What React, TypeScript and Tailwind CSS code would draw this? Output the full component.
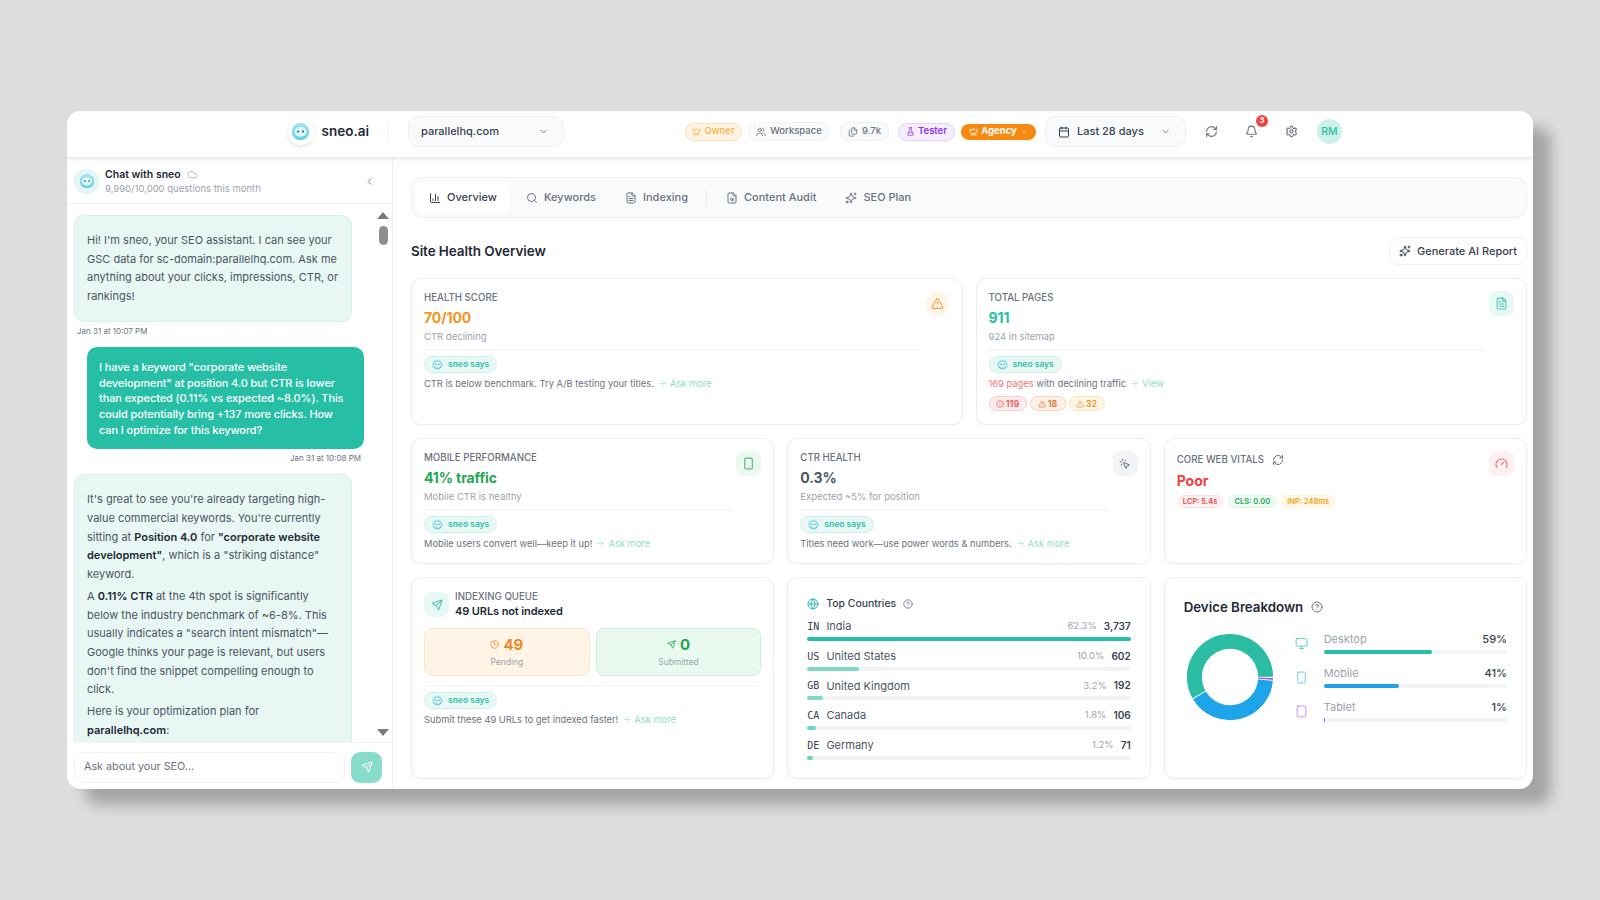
import React from "react";
import {
  ChartColumn, Search, FileText, FileSearch, Sparkles, Crown, Users, Files, FlaskConical, Calendar,
  ChevronDown, ChevronLeft, RefreshCw, Bell, Settings, TriangleAlert, Smartphone, MousePointerClick,
  Gauge, Send, Clock, Globe, CircleHelp, Monitor, Tablet, CircleAlert, ArrowRight, Cloud,
} from "lucide-react";

function Face({ size = 16 }: { size?: number }) {
  return (
    <svg width={size} height={size} viewBox="0 0 24 24">
      <defs>
        <linearGradient id="fg" x1="0" y1="0" x2="0" y2="1">
          <stop offset="0" stopColor="#a8e6ee" />
          <stop offset="1" stopColor="#5fd0dd" />
        </linearGradient>
      </defs>
      <circle cx="12" cy="12" r="11" fill="url(#fg)" />
      <ellipse cx="12" cy="12.5" rx="7.6" ry="6.2" fill="#dff6f7" />
      <circle cx="8.8" cy="12" r="1.3" fill="#28536b" />
      <circle cx="15.2" cy="12" r="1.3" fill="#28536b" />
    </svg>
  );
}

function SneoPill() {
  return (
    <div className="flex h-[17px] w-fit items-center gap-[5px] rounded-full border border-[#cdf1ea] bg-[#e8f8f5] pl-[7px] pr-[7px] text-[8.5px] font-semibold text-[#2fbfa5]">
      <Face size={11} />
      <span>sneo says</span>
    </div>
  );
}

function Ask({ label = "Ask more" }: { label?: string }) {
  return (
    <span className="ml-[4px] text-[#8fdcca]">
      <ArrowRight size={9} strokeWidth={1.6} className="mr-[3px] inline align-[-1px]" />
      {label}
    </span>
  );
}

function Label({ children }: { children: React.ReactNode }) {
  return <div className="text-[9.7px] font-medium uppercase leading-[14px] text-[#6b7280]">{children}</div>;
}

function Card({ children, className = "" }: { children: React.ReactNode; className?: string }) {
  return (
    <div className={`min-w-0 rounded-[10px] border border-[#e9eef2] bg-white shadow-[0_1px_2px_rgba(0,0,0,0.03)] ${className}`}>
      {children}
    </div>
  );
}

function IconBox({ children, className }: { children: React.ReactNode; className: string }) {
  return <div className={`flex h-[25px] w-[25px] shrink-0 items-center justify-center rounded-[8px] ${className}`}>{children}</div>;
}

function StatCard({
  label, value, valueClass, sub, text, icon, iconClass, extra,
}: {
  label: string; value: string; valueClass: string; sub: string; text: React.ReactNode;
  icon: React.ReactNode; iconClass: string; extra?: React.ReactNode;
}) {
  return (
    <Card className="flex gap-[5px] pl-[12px] pr-[12px] pt-[12px]">
      <div className="min-w-0 flex-1">
        <Label>{label}</Label>
        <div className={`mt-[3px] text-[14px] font-bold leading-[20px] tracking-[-0.1px] ${valueClass}`}>{value}</div>
        <div className="mt-[2px] text-[9.5px] leading-[14px] text-[#9ca3af]">{sub}</div>
        <div className="mt-[5px] border-t border-[#f1f3f5] pt-[6px]">
          <SneoPill />
          <div className="mt-[4px] text-[9.35px] leading-[14px] text-[#6b7280]">{text}</div>
          {extra}
        </div>
      </div>
      <div>
        <IconBox className={iconClass}>{icon}</IconBox>
      </div>
    </Card>
  );
}

const countries = [
  { c: "IN", n: "India", p: "62.3%", v: "3,737", w: 100, o: "bg-[#26bfa5]" },
  { c: "US", n: "United States", p: "10.0%", v: "602", w: 16, o: "bg-[#7dd9c8]" },
  { c: "GB", n: "United Kingdom", p: "3.2%", v: "192", w: 5, o: "bg-[#7dd9c8]" },
  { c: "CA", n: "Canada", p: "1.8%", v: "106", w: 2.8, o: "bg-[#6bd5c2]" },
  { c: "DE", n: "Germany", p: "1.2%", v: "71", w: 1.9, o: "bg-[#6bd5c2]" },
];

const devices = [
  { n: "Desktop", p: "59%", w: 59, o: "bg-[#26bfa5]", i: <Monitor size={13} className="text-[#4cc9b4]" strokeWidth={1.6} /> },
  { n: "Mobile", p: "41%", w: 41, o: "bg-[#1ea1e6]", i: <Smartphone size={13} className="text-[#6bbcf0]" strokeWidth={1.6} /> },
  { n: "Tablet", p: "1%", w: 1, o: "bg-[#a855f7]", i: <Tablet size={13} className="text-[#c084fc]" strokeWidth={1.6} /> },
];

function arc(a0: number, a1: number, R: number, r: number) {
  const pt = (a: number, rad: number) => {
    const t = (a * Math.PI) / 180;
    return `${(50 + rad * Math.cos(t)).toFixed(2)} ${(50 - rad * Math.sin(t)).toFixed(2)}`;
  };
  const large = a1 - a0 > 180 ? 1 : 0;
  return `M${pt(a0, R)} A${R} ${R} 0 ${large} 0 ${pt(a1, R)} L${pt(a1, r)} A${r} ${r} 0 ${large} 1 ${pt(a0, r)} Z`;
}

function Donut() {
  return (
    <svg width="88" height="88" viewBox="0 0 100 100" className="shrink-0">
      <path d={arc(0.5, 209.5, 49, 32)} fill="#2bbda4" />
      <path d={arc(211, 355, 49, 32)} fill="#1ea5e9" />
      <path d={arc(356.2, 358.8, 49, 32)} fill="#a855f7" />
    </svg>
  );
}

function Tab({ icon, label, active }: { icon: React.ReactNode; label: string; active?: boolean }) {
  return (
    <div className={`flex h-[31px] items-center gap-[6px] rounded-[8px] px-[13px] text-[11px] font-medium ${active ? "bg-white text-[#374151]" : "text-[#6b7280]"}`}>
      {icon}
      <span>{label}</span>
    </div>
  );
}

export default function App() {
  return (
    <div className="flex h-[900px] w-[1600px] items-center justify-center overflow-hidden bg-[#dddddd] font-['Inter',sans-serif]">
      <div className="flex h-[678px] w-[1466px] flex-col overflow-hidden rounded-[14px] bg-white shadow-[18px_16px_14px_rgba(0,0,0,0.26)]">
        {/* Header */}
        <header className="relative z-10 flex h-[46px] shrink-0 items-center bg-white pb-[5px] pr-[191px] shadow-[0_2px_4px_rgba(0,0,0,0.1)]">
          <div className="flex w-[321px] shrink-0 items-center justify-end pr-[19px]">
            <div className="flex h-[26px] w-[26px] items-center justify-center rounded-full bg-white shadow-[0_2px_4px_rgba(0,0,0,0.1)]">
              <Face size={19} />
            </div>
            <span className="ml-[8px] text-[13.5px] font-semibold text-[#1f2937]">sneo.ai</span>
          </div>
          <div className="h-[18px] w-px bg-[#f3f4f6]" />
          <div className="ml-[19px] flex h-[31px] w-[156px] items-center justify-between rounded-[10px] border border-[#eef0f3] bg-[#f9fafb] pl-[12px] pr-[14px] text-[11px] font-medium text-[#374151]">
            <span>parallelhq.com</span>
            <ChevronDown size={11} className="text-[#6b7280]" />
          </div>
          <div className="ml-auto flex items-center gap-[6px] text-[9.5px] font-medium">
            <div className="flex h-[18px] w-[57px] items-center justify-center gap-[3px] rounded-full border border-[#fde2b8] bg-[#fff4e2] text-[#f9b24a]">
              <Crown size={9} /><span>Owner</span>
            </div>
            <div className="flex h-[19px] w-[82px] items-center justify-center gap-[4px] rounded-full border border-[#f0f2f4] bg-[#f9fafb] text-[#6b7280]">
              <Users size={10} /><span>Workspace</span>
            </div>
            <div className="ml-[4px] flex h-[19px] w-[49px] items-center justify-center gap-[4px] rounded-[8px] border border-[#eef0f3] bg-[#f9fafb] text-[#6b7280]">
              <Files size={10} /><span>9.7k</span>
            </div>
            <div className="ml-[3px] flex h-[18px] w-[57px] items-center justify-center gap-[3px] rounded-full border border-[#e3d2fb] bg-[#f5eefe] font-semibold text-[#9333ea]">
              <FlaskConical size={9} /><span>Tester</span>
            </div>
            <div className="flex h-[16px] w-[75px] items-center justify-center gap-[3px] rounded-full bg-[#f7890f] font-bold text-white">
              <Crown size={9} /><span>Agency</span><ChevronDown size={8} />
            </div>
          </div>
          <div className="ml-[9px] flex h-[31px] w-[141px] items-center rounded-[10px] border border-[#eef0f3] bg-[#f9fafb] pl-[12px] pr-[14px] text-[11px] font-medium text-[#374151]">
            <Calendar size={12} />
            <span className="ml-[7px]">Last 28 days</span>
            <ChevronDown size={11} className="ml-auto text-[#6b7280]" />
          </div>
          <RefreshCw size={13} className="ml-[19px] text-[#6b7280]" />
          <div className="relative ml-[27px]">
            <Bell size={13} className="text-[#6b7280]" />
            <div className="absolute -right-[10px] -top-[10px] flex h-[12px] w-[12px] items-center justify-center rounded-full bg-[#ef4444] text-[7.5px] font-bold text-white">3</div>
          </div>
          <Settings size={13} className="ml-[27px] text-[#6b7280]" />
          <div className="ml-[19px] flex h-[25px] w-[25px] items-center justify-center rounded-full bg-[#cdf1ea] text-[10.5px] font-medium text-[#2bbda4]">RM</div>
        </header>

        <div className="flex min-h-0 flex-1">
          {/* Chat */}
          <aside className="flex w-[326px] shrink-0 flex-col border-r border-[#eef0f3]">
            <div className="flex h-[47px] shrink-0 items-center border-b border-[#f1f3f5] pl-[7px] pr-[17px] pt-[2px]">
              <div className="flex h-[25px] w-[25px] items-center justify-center rounded-full border border-[#d5f3ee] bg-[#e6f8f5]">
                <Face size={16} />
              </div>
              <div className="ml-[6px] flex-1">
                <div className="flex items-center gap-[6px] text-[10.5px] font-semibold leading-[14px] text-[#1f2937]">
                  <span>Chat with sneo</span>
                  <Cloud size={11} strokeWidth={1.5} className="text-[#9ca3af]" />
                </div>
                <div className="text-[9.5px] leading-[13px] text-[#9ca3af]">9,990/10,000 questions this month</div>
              </div>
              <ChevronLeft size={11} className="text-[#6b7280]" />
            </div>

            <div className="relative min-h-0 flex-1 overflow-hidden pl-[7px] pt-[11px]">
              <div className="w-[278px] rounded-[10px] border border-[#d5f1eb] bg-[#e8f7f4] pb-[15px] pl-[12px] pr-[11px] pt-[15px] text-[11px] leading-[18.7px] text-[#4b5563]">
                Hi! I'm sneo, your SEO assistant. I can see your GSC data for sc-domain:parallelhq.com. Ask me anything about your clicks, impressions, CTR, or rankings!
              </div>
              <div className="mb-[10px] ml-[3px] mt-[3px] text-[8px] leading-[12px] text-[#6b7280]">Jan 31 at 10:07 PM</div>
              <div className="ml-[13px] w-[277px] rounded-[10px] bg-[#26bfa5] px-[12px] pb-[11px] pt-[13px] text-[11px] font-medium leading-[15.7px] tracking-[-0.1px] text-white">
                I have a keyword "corporate website development" at position 4.0 but CTR is lower than expected (0.11% vs expected ~8.0%). This could potentially bring +137 more clicks. How can I optimize for this keyword?
              </div>
              <div className="mb-[10px] mt-[3px] w-[287px] text-right text-[8px] leading-[12px] text-[#6b7280]">Jan 31 at 10:08 PM</div>
              <div className="w-[278px] rounded-[10px] border border-[#d5f1eb] bg-[#e8f7f4] pb-[12px] pl-[12px] pr-[11px] pt-[15px] text-[11px] leading-[18.7px] text-[#4b5563]">
                <p>It's great to see you're already targeting high-value commercial keywords. You're currently sitting at <b className="font-semibold text-[#1f2937]">Position 4.0</b> for <b className="font-semibold text-[#1f2937]">"corporate website development"</b>, which is a "striking distance" keyword.</p>
                <p className="mt-[3px]">A <b className="font-semibold text-[#1f2937]">0.11% CTR</b> at the 4th spot is significantly below the industry benchmark of ~6-8%. This usually indicates a "search intent mismatch"—Google thinks your page is relevant, but users don't find the snippet compelling enough to click.</p>
                <p className="mt-[3px]">Here is your optimization plan for <b className="font-semibold text-[#1f2937]">parallelhq.com</b>:</p>
              </div>
              {/* scrollbar */}
              <div className="absolute right-[3px] top-[8px] h-0 w-0 border-x-[6px] border-b-[7px] border-x-transparent border-b-[#7a7a7a]" />
              <div className="absolute right-[4px] top-[22px] h-[19px] w-[9px] rounded-full bg-[#8e8e8e]" />
              <div className="absolute bottom-[6px] right-[3px] h-0 w-0 border-x-[6px] border-t-[7px] border-x-transparent border-t-[#7a7a7a]" />
            </div>

            <div className="flex h-[47px] shrink-0 items-center gap-[6px] border-t border-[#f1f3f5] pb-[7px] pl-[7px] pt-[9px]">
              <div className="flex h-[31px] w-[271px] items-center rounded-[10px] border border-[#eef0f3] px-[9px] text-[10.75px] text-[#6b7280]">Ask about your SEO...</div>
              <div className="flex h-[31px] w-[31px] items-center justify-center rounded-[9px] bg-[#87dccb]">
                <Send size={12} className="text-white" />
              </div>
            </div>
          </aside>

          {/* Main */}
          <main className="min-w-0 flex-1 pl-[18px] pr-[6px] pt-[20px]">
            <div className="flex h-[41px] items-center rounded-[10px] border border-[#eef0f3] bg-[#f9fafb] pl-[4px]">
              <Tab active icon={<ChartColumn size={12} />} label="Overview" />
              <div className="ml-[3px]"><Tab icon={<Search size={12} />} label="Keywords" /></div>
              <div className="ml-[3px]"><Tab icon={<FileText size={12} />} label="Indexing" /></div>
              <div className="ml-[5px] h-[18px] w-px bg-[#e9ecef]" />
              <div className="ml-[6px]"><Tab icon={<FileSearch size={12} />} label="Content Audit" /></div>
              <div className="ml-[3px]"><Tab icon={<Sparkles size={12} />} label="SEO Plan" /></div>
            </div>

            <div className="mt-[19px] flex h-[28px] items-center justify-between">
              <h1 className="text-[13.5px] font-semibold tracking-[-0.1px] text-[#1f2937]">Site Health Overview</h1>
              <div className="flex h-[28px] w-[138px] items-center justify-center gap-[6px] rounded-[8px] border border-[#eef0f3] bg-white text-[11px] font-medium text-[#374151]">
                <Sparkles size={12} /><span>Generate AI Report</span>
              </div>
            </div>

            <div className="mt-[13px] grid h-[147px] grid-cols-2 gap-[13px]">
              <StatCard
                label="Health Score" value="70/100" valueClass="text-[#f7931e]" sub="CTR declining"
                text={<>CTR is below benchmark. Try A/B testing your titles.<Ask /></>}
                icon={<TriangleAlert size={13} className="text-[#f9a03f]" />} iconClass="bg-[#fff6ea] rounded-full"
              />
              <StatCard
                label="Total Pages" value="911" valueClass="text-[#26bfa5]" sub="924 in sitemap"
                text={<><span className="text-[#f8717a]">169 pages</span> with declining traffic<Ask label="View" /></>}
                icon={<FileText size={13} className="text-[#4cc9b4]" />} iconClass="bg-[#e8f8f5]"
                extra={
                  <div className="mt-[5px] flex gap-[3px] text-[9px] font-semibold">
                    <div className="flex h-[15px] w-[38px] items-center justify-center gap-[2px] rounded-full border border-[#fbc9c9] bg-[#fdecec] text-[#ef5350]"><CircleAlert size={8} />119</div>
                    <div className="flex h-[15px] w-[36px] items-center justify-center gap-[2px] rounded-full border border-[#fbd3b8] bg-[#fdf0e6] text-[#ea6f2d]"><TriangleAlert size={8} />18</div>
                    <div className="flex h-[15px] w-[36px] items-center justify-center gap-[2px] rounded-full border border-[#fde2b8] bg-[#fff6e6] text-[#e8932a]"><TriangleAlert size={8} />32</div>
                  </div>
                }
              />
            </div>

            <div className="mt-[13px] grid h-[126px] grid-cols-3 gap-[13px]">
              <StatCard
                label="Mobile Performance" value="41% traffic" valueClass="text-[#22a652]" sub="Mobile CTR is healthy"
                text={<>Mobile users convert well—keep it up!<Ask /></>}
                icon={<Smartphone size={13} className="text-[#4cb86f]" />} iconClass="bg-[#edf9f0]"
              />
              <StatCard
                label="CTR Health" value="0.3%" valueClass="text-[#4b5563]" sub="Expected ~5% for position"
                text={<>Titles need work—use power words &amp; numbers.<Ask /></>}
                icon={<MousePointerClick size={12} className="text-[#6b7280]" />} iconClass="bg-[#f3f4f6]"
              />
              <Card className="flex gap-[5px] pl-[12px] pr-[12px] pt-[12px]">
                <div className="flex-1">
                  <div className="flex items-center gap-[8px] pt-[2px]">
                    <Label>Core Web Vitals</Label>
                    <RefreshCw size={12} className="text-[#6b7280]" />
                  </div>
                  <div className="mt-[3px] text-[14px] font-bold leading-[22px] text-[#ef3f3f]">Poor</div>
                  <div className="mt-[3px] flex gap-[5px] text-[7.5px] font-semibold">
                    <div className="flex h-[13px] items-center rounded-full border border-[#fbe3e3] bg-[#fdf2f2] px-[5px] text-[#ef4444]">LCP: 5.4s</div>
                    <div className="flex h-[13px] items-center rounded-full border border-[#dff5e5] bg-[#f0fbf3] px-[5px] text-[#22a652]">CLS: 0.00</div>
                    <div className="flex h-[13px] items-center rounded-full border border-[#fdf0d5] bg-[#fff9ec] px-[5px] text-[#f59e0b]">INP: 248ms</div>
                  </div>
                </div>
                <div>
                  <IconBox className="bg-[#fdf0f0]"><Gauge size={13} className="text-[#f0656a]" /></IconBox>
                </div>
              </Card>
            </div>

            <div className="mt-[13px] grid h-[202px] grid-cols-3 gap-[13px]">
              <Card className="px-[12px] pt-[12px]">
                <div className="flex items-center gap-[6px]">
                  <IconBox className="bg-[#e8f8f5]"><Send size={12} className="text-[#3cc4ac]" /></IconBox>
                  <div>
                    <Label>Indexing Queue</Label>
                    <div className="text-[11px] font-semibold leading-[15px] tracking-[-0.1px] text-[#1f2937]">49 URLs not indexed</div>
                  </div>
                </div>
                <div className="mt-[9px] grid grid-cols-2 gap-[6px]">
                  <div className="flex h-[48px] flex-col items-center justify-center rounded-[8px] border border-[#fde6c8] bg-[#fff4e6]">
                    <div className="flex items-center gap-[4px] text-[15px] font-bold leading-[19px] text-[#ea8a26]"><Clock size={9} />49</div>
                    <div className="mt-[2px] text-[8.5px] text-[#9ca3af]">Pending</div>
                  </div>
                  <div className="flex h-[48px] flex-col items-center justify-center rounded-[8px] border border-[#cdf1db] bg-[#e9f9ef]">
                    <div className="flex items-center gap-[4px] text-[15px] font-bold leading-[19px] text-[#22a652]"><Send size={9} />0</div>
                    <div className="mt-[2px] text-[8.5px] text-[#9ca3af]">Submitted</div>
                  </div>
                </div>
                <div className="mt-[9px] border-t border-[#f1f3f5] pt-[6px]">
                  <SneoPill />
                  <div className="mt-[4px] text-[9.35px] leading-[14px] text-[#6b7280]">Submit these 49 URLs to get indexed faster!<Ask /></div>
                </div>
              </Card>

              <Card className="px-[19px] pt-[18px]">
                <div className="flex items-center gap-[7px] text-[10.4px] font-medium leading-[16px] text-[#374151]">
                  <Globe size={12} className="text-[#26bfa5]" />
                  <span>Top Countries</span>
                  <CircleHelp size={10} className="text-[#6b7280]" />
                </div>
                <div className="mt-[9px] flex flex-col gap-[9.7px]">
                  {countries.map((x) => (
                    <div key={x.c}>
                      <div className="flex h-[11px] items-center text-[11px] text-[#4b5563]">
                        <span className="font-['DejaVu_Sans_Mono',monospace] text-[10px] text-[#374151]">{x.c}</span>
                        <span className="ml-[7px]">{x.n}</span>
                        <span className="ml-auto text-[9.5px] text-[#9ca3af]">{x.p}</span>
                        <span className="ml-[7px] w-auto text-[10px] font-semibold text-[#374151]">{x.v}</span>
                      </div>
                      <div className="mt-[5px] h-[4px] rounded-full bg-[#f3f4f6]">
                        <div className={`h-full rounded-full ${x.o}`} style={{ width: `${x.w}%` }} />
                      </div>
                    </div>
                  ))}
                </div>
              </Card>

              <Card className="pl-[19px] pr-[19px] pt-[20px]">
                <div className="flex items-center gap-[8px] text-[13.3px] font-semibold leading-[18px] text-[#1f2937]">
                  <span>Device Breakdown</span>
                  <CircleHelp size={12} className="text-[#6b7280]" />
                </div>
                <div className="ml-[2px] mt-[17px] flex">
                  <Donut />
                  <div className="-mt-[1px] ml-[21px] flex flex-1 flex-col gap-[12.2px]">
                    {devices.map((d) => (
                      <div key={d.n} className="flex items-center gap-[16px]">
                        <div className="w-[13px]">{d.i}</div>
                        <div className="flex-1">
                          <div className="flex items-center justify-between text-[11px] leading-[14px]">
                            <span className="text-[#9ca3af]">{d.n}</span>
                            <span className="font-medium text-[#374151]">{d.p}</span>
                          </div>
                          <div className="mt-[4px] h-[4px] rounded-full bg-[#f3f4f6]">
                            <div className={`h-full rounded-full ${d.o}`} style={{ width: `${d.w}%` }} />
                          </div>
                        </div>
                      </div>
                    ))}
                  </div>
                </div>
              </Card>
            </div>
          </main>
        </div>
      </div>
    </div>
  );
}
